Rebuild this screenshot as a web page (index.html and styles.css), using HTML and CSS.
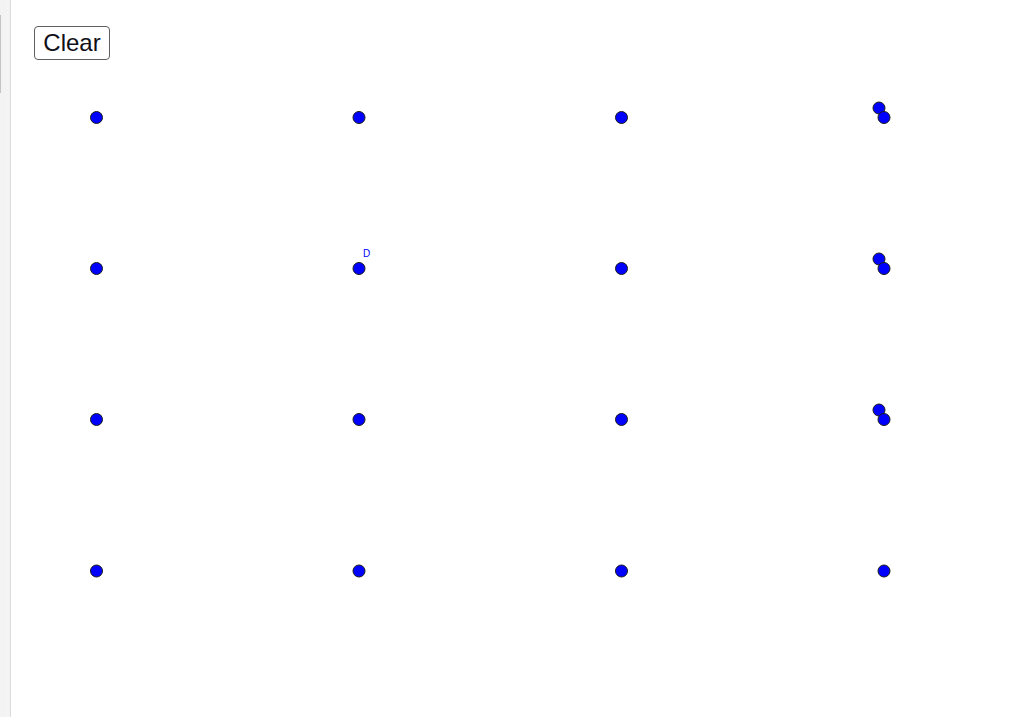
FILE: index.html
```html
<!DOCTYPE html>
<html>
<head>
<meta charset="utf-8">
<link rel="stylesheet" href="styles.css">
</head>
<body>
<div class="app">
  <aside class="rail">
    <div class="rail-handle"></div>
  </aside>
  <main class="stage">
    <div class="toolbar">
      <button class="clear-btn">Clear</button>
    </div>
    <svg class="canvas" viewBox="11 60 1016 657" preserveAspectRatio="xMinYMin meet">
      <g class="pts">
        <circle cx="96.5" cy="117.5" r="6"/>
        <circle cx="359" cy="117.5" r="6"/>
        <circle cx="621.5" cy="117.5" r="6"/>
        <circle cx="879" cy="108" r="6"/>
        <circle cx="884" cy="117.5" r="6"/>

        <circle cx="96.5" cy="268.5" r="6"/>
        <circle cx="359" cy="268.5" r="6"/>
        <circle cx="621.5" cy="268.5" r="6"/>
        <circle cx="879" cy="259" r="6"/>
        <circle cx="884" cy="268.5" r="6"/>

        <circle cx="96.5" cy="419.5" r="6"/>
        <circle cx="359" cy="419.5" r="6"/>
        <circle cx="621.5" cy="419.5" r="6"/>
        <circle cx="879" cy="410" r="6"/>
        <circle cx="884" cy="419.5" r="6"/>

        <circle cx="96.5" cy="571" r="6"/>
        <circle cx="359" cy="571" r="6"/>
        <circle cx="621.5" cy="571" r="6"/>
        <circle cx="884" cy="571" r="6"/>
      </g>
      <text class="lbl" x="363" y="257">D</text>
    </svg>
  </main>
</div>
</body>
</html>
```

FILE: styles.css
```css
html, body {
  margin: 0;
  padding: 0;
  background: #ffffff;
  font-family: "Liberation Sans", Arial, sans-serif;
  overflow: hidden;
}

.app {
  display: flex;
  width: 1027px;
  height: 717px;
}

.rail {
  position: relative;
  width: 10px;
  flex: 0 0 10px;
  border-right: 1px solid #dcdcdc;
  background-color: #f3f3f3;
  background-image: repeating-linear-gradient(
    to bottom,
    #fafafa 0px,
    #fafafa 1px,
    transparent 1px,
    transparent 4px
  );
  background-size: 1px 100%;
  background-position: 7px 0;
  background-repeat: no-repeat;
}

.rail-handle {
  position: absolute;
  left: 0;
  top: 15px;
  width: 1px;
  height: 78px;
  background: #c4c4c4;
}

.stage {
  flex: 1;
  display: flex;
  flex-direction: column;
  min-width: 0;
}

.toolbar {
  padding: 26px 0 0 23px;
  height: 34px;
  display: flex;
  align-items: flex-start;
}

.clear-btn {
  box-sizing: border-box;
  width: 76px;
  height: 34px;
  padding: 0;
  margin: 0;
  font-family: "Liberation Sans", Arial, sans-serif;
  font-size: 24px;
  line-height: 32px;
  color: #101018;
  background: #ffffff;
  border: 1px solid #5f5f5f;
  border-radius: 4px;
}

.canvas {
  display: block;
  width: 1016px;
  height: 657px;
}

.pts circle {
  fill: #0000ff;
  stroke: #1a1a1a;
  stroke-width: 1;
}

.lbl {
  fill: #0000ff;
  font-family: "Liberation Sans", Arial, sans-serif;
  font-size: 10px;
}
```
